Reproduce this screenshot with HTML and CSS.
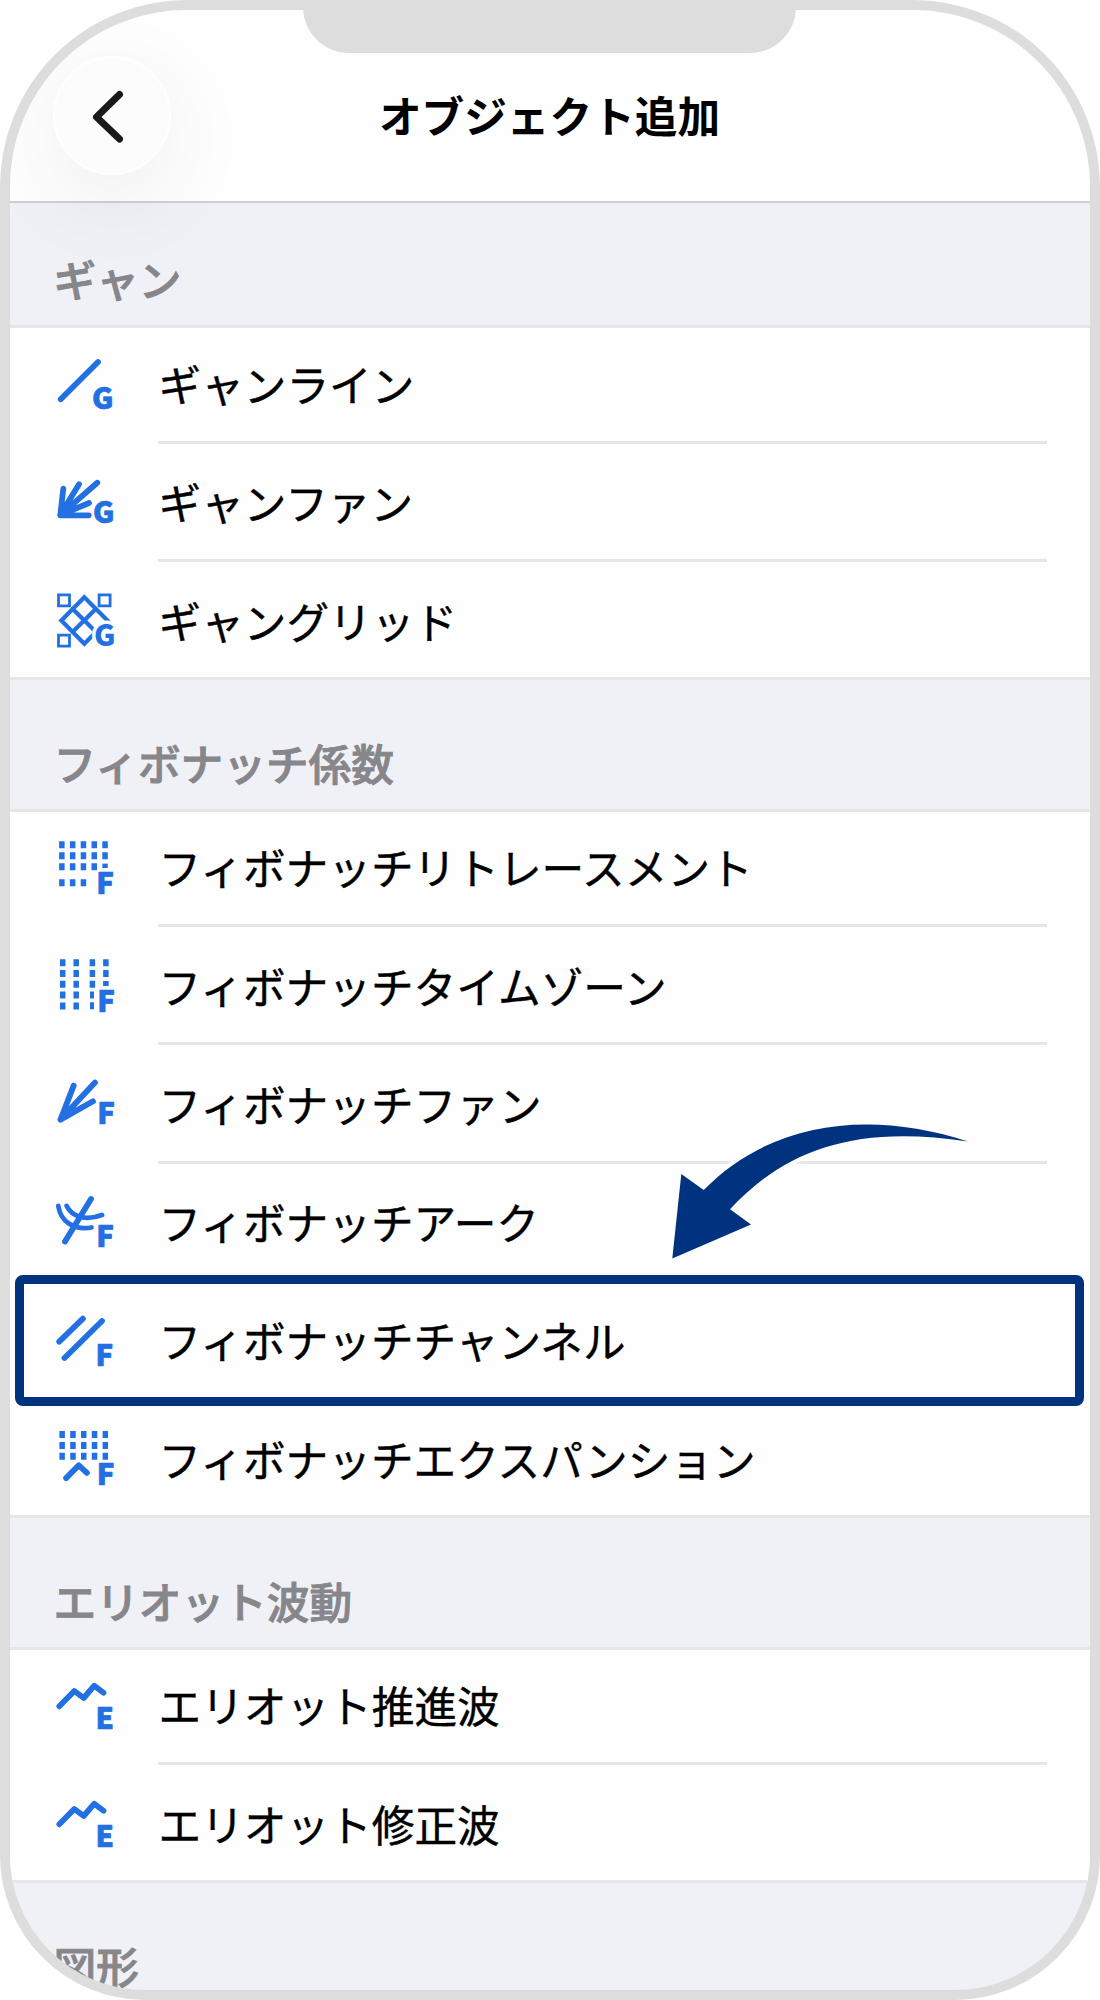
FILE: index.html
```html
<!DOCTYPE html>
<html lang="ja">
<head>
<meta charset="utf-8">
<title>オブジェクト追加</title>
<link rel="stylesheet" href="styles.css">
</head>
<body>
<div class="phone">
  <header class="navbar">
    <button class="back" aria-label="戻る">
      <svg class="back-icon" viewBox="0 0 40 60"><path d="M30.5 8.5 7.5 31l23 22"/></svg>
    </button>
    <h1 class="title">オブジェクト追加</h1>
  </header>
  <div class="notch"></div>

  <h2 class="section first">ギャン</h2>
  <ul class="list">
    <li class="row">
      <svg class="icon" viewBox="50 0 70 118"><path d="M60.7 73.3 98 36"/><text x="92" y="82.8">G</text></svg>
      <span class="label">ギャンライン</span>
    </li>
    <li class="row">
      <svg class="icon" viewBox="50 0 70 118"><path d="M88.7 71.3H60.3L63.3 44.7M60.3 71 79 40.3M60.3 71 97.3 38.7M60.3 71 89 59"/><text x="93" y="79">G</text></svg>
      <span class="label">ギャンファン</span>
    </li>
    <li class="row">
      <svg class="icon" viewBox="50 0 70 118"><g class="thin"><path d="M58.5 32.9h11v11h-11zM99.1 32.9h11v11h-11zM58.5 73.1h11v11h-11z"/></g><g class="mid"><path d="M84.3 35.2 107.5 58.4 84.3 81.8 61.3 58.4zM72.5 46.8 96 70M96 46.8 72.5 70"/></g><text class="halo" x="94" y="84.4">G</text></svg>
      <span class="label">ギャングリッド</span>
    </li>
  </ul>

  <h2 class="section">フィボナッチ係数</h2>
  <ul class="list">
    <li class="row">
      <svg class="icon" viewBox="50 0 70 118"><g class="dots"><path d="M59.1 35.8H108M59.1 46.8H108M59.1 57.7H97M59.1 73.7H87"/></g><path class="fill" d="M102.4 54.6h5.4v4.4h-5.4z"/><text x="96.3" y="84.8">F</text></svg>
      <span class="label">フィボナッチリトレースメント</span>
    </li>
    <li class="row">
      <svg class="icon" viewBox="50 0 70 118"><g class="bars"><path d="M62.7 32.2V83M76.2 32.2V83M92.4 32.2V61.5M105.9 32.2V50.5"/></g><path class="fill" d="M103.1 54.1h5.6v4.8h-5.6zM90 64.6h4v7h-4zM90 75.3h4v7h-4z"/><text x="97.3" y="84.5">F</text></svg>
      <span class="label">フィボナッチタイムゾーン</span>
    </li>
    <li class="row">
      <svg class="icon" viewBox="50 0 70 118"><path d="M73.7 40.6 60.5 74.6 95 37.6M60.5 74.6 93 56.3"/><text x="97.3" y="79.1">F</text></svg>
      <span class="label">フィボナッチファン</span>
    </li>
    <li class="row">
      <svg class="icon" viewBox="50 0 70 118"><path d="M91 35 65 77.5"/><g class="arc"><path d="M58.3 42C60.5 57 73 66.5 91.5 63.5M66.7 42C72 53 86 57 102 51"/></g><text x="96.3" y="83.4">F</text></svg>
      <span class="label">フィボナッチアーク</span>
    </li>
    <li class="row selected">
      <svg class="icon" viewBox="50 0 70 118"><path d="M82.9 36.7 59.2 59.7M102 39 64.5 76"/><text x="95.6" y="83.5">F</text></svg>
      <span class="label">フィボナッチチャンネル</span>
      <svg class="pointer" viewBox="665 1115 310 150"><path d="M672.3 1258.5 681.3 1174 703.7 1190C770 1122 868 1109 968 1141.5C855 1124 785 1150 730 1209.3L751 1224.5z"/></svg>
    </li>
    <li class="row">
      <svg class="icon" viewBox="50 0 70 118"><g class="dots"><path d="M59.4 34.6H108M59.4 45.4H108M59.4 56.3H108"/></g><path d="M66.1 78.1 78.8 65.3 86.9 72.8"/><text x="96.8" y="85.3">F</text></svg>
      <span class="label">フィボナッチエクスパンション</span>
    </li>
  </ul>

  <h2 class="section">エリオット波動</h2>
  <ul class="list">
    <li class="row">
      <svg class="icon" viewBox="50 0 70 118"><path d="M59.3 59.3 74.3 44 83.7 51 94.3 38.7 103.5 45.7"/><text x="95.5" y="82.2">E</text></svg>
      <span class="label">エリオット推進波</span>
    </li>
    <li class="row">
      <svg class="icon" viewBox="50 0 70 118"><path d="M59.3 59.3 74.3 44 83.7 51 94.3 38.7 103.5 45.7"/><text x="95.5" y="82.2">E</text></svg>
      <span class="label">エリオット修正波</span>
    </li>
  </ul>

  <h2 class="section last">図形</h2>
</div>
</body>
</html>
```
FILE: styles.css
```css
*, *::after { box-sizing: border-box; }

body {
  margin: 0;
  background: #fff;
  font-family: "Noto Sans CJK JP", sans-serif;
  color: #000;
}

.phone {
  position: relative;
  width: 1100px;
  height: 2000px;
  overflow: hidden;
  border: 10px solid #ddd;
  border-radius: 187px 187px 145px 145px;
  background: #f0f1f6;
}

.navbar {
  position: relative;
  display: flex;
  align-items: center;
  justify-content: center;
  height: 193px;
  padding: 18px 1px 0 0;
  border-bottom: 2px solid #cfd1d1;
  background: #fefefe;
}

.back {
  position: absolute;
  left: 43px;
  top: 46px;
  width: 118px;
  height: 119px;
  padding: 0;
  border: 2px solid #fff;
  border-radius: 50%;
  background: #fcfcfc;
  box-shadow: 0 24px 95px rgba(0, 0, 0, .07);
}

.back-icon {
  position: absolute;
  left: 34px;
  top: 28px;
  width: 40px;
  height: 60px;
  fill: none;
  stroke: #1a1a1a;
  stroke-width: 7;
  stroke-linecap: round;
  stroke-linejoin: round;
}

.title {
  margin: 0;
  font-size: 42.67px;
  font-weight: 700;
  line-height: 60px;
}

.notch {
  position: absolute;
  left: 293px;
  top: -10px;
  width: 493px;
  height: 53px;
  border-radius: 0 0 46px 46px;
  background: #ddd;
}

.section {
  display: flex;
  align-items: flex-end;
  height: 128.5px;
  margin: 0;
  padding: 0 0 16px 43.5px;
  color: #86868b;
  font-size: 42.67px;
  font-weight: 500;
  line-height: 60px;
  -webkit-text-stroke: .9px #86868b;
}

.section.first { height: 122px; }

.list {
  margin: 0;
  padding: 0;
  list-style: none;
  background: #fefefe;
  box-shadow: inset 0 3px #e5e7e7, inset 0 -3px #e5e7e7;
}

.first + .list { padding-top: .6px; }

.row {
  position: relative;
  display: flex;
  align-items: center;
  gap: 38.5px;
  height: 118.25px;
  padding-left: 40px;
}

.row:not(:last-child) {
  background: linear-gradient(#e5e7e7, #e5e7e7) 148px 100% / 889px 3px no-repeat;
}

.icon {
  flex: none;
  width: 70px;
  height: 118px;
  fill: none;
  stroke: #2270e2;
  stroke-width: 5.8;
  stroke-linecap: round;
  stroke-linejoin: round;
}

.icon text {
  fill: #2270e2;
  stroke: #2270e2;
  stroke-width: .7;
  font-size: 29.3px;
  font-weight: 900;
}

.icon .halo {
  stroke: #fefefe;
  stroke-width: 7;
  paint-order: stroke;
}

.thin { stroke-width: 2.8; stroke-linejoin: miter; }
.mid { stroke-width: 4.2; stroke-linejoin: miter; }
.arc { stroke-width: 4.8; }
.dots { stroke-width: 7; stroke-linecap: butt; stroke-dasharray: 5.5 5.3; }
.bars { stroke-width: 5.5; stroke-linecap: butt; stroke-dasharray: 7 3.8; }
.icon .fill { fill: #2270e2; stroke: none; }

.label {
  padding-bottom: 1px;
  font-size: 42.67px;
  line-height: 60px;
  white-space: nowrap;
  -webkit-text-stroke: .4px #000;
}

/* the frame's inside covers both neighbouring separators */
.row.selected { background: none; }

.row:has(+ .selected) { background: none; }

.selected::after {
  content: "";
  position: absolute;
  left: 5px;
  top: -7px;
  width: 1069px;
  height: 131px;
  border: 9px solid #00337f;
  border-radius: 8px;
}

.pointer {
  position: absolute;
  left: 655px;
  top: -167px;
  width: 310px;
  height: 150px;
  overflow: visible;
  fill: #00337f;
  stroke: #fefefe;
  stroke-width: 8;
  paint-order: stroke;
}
```
